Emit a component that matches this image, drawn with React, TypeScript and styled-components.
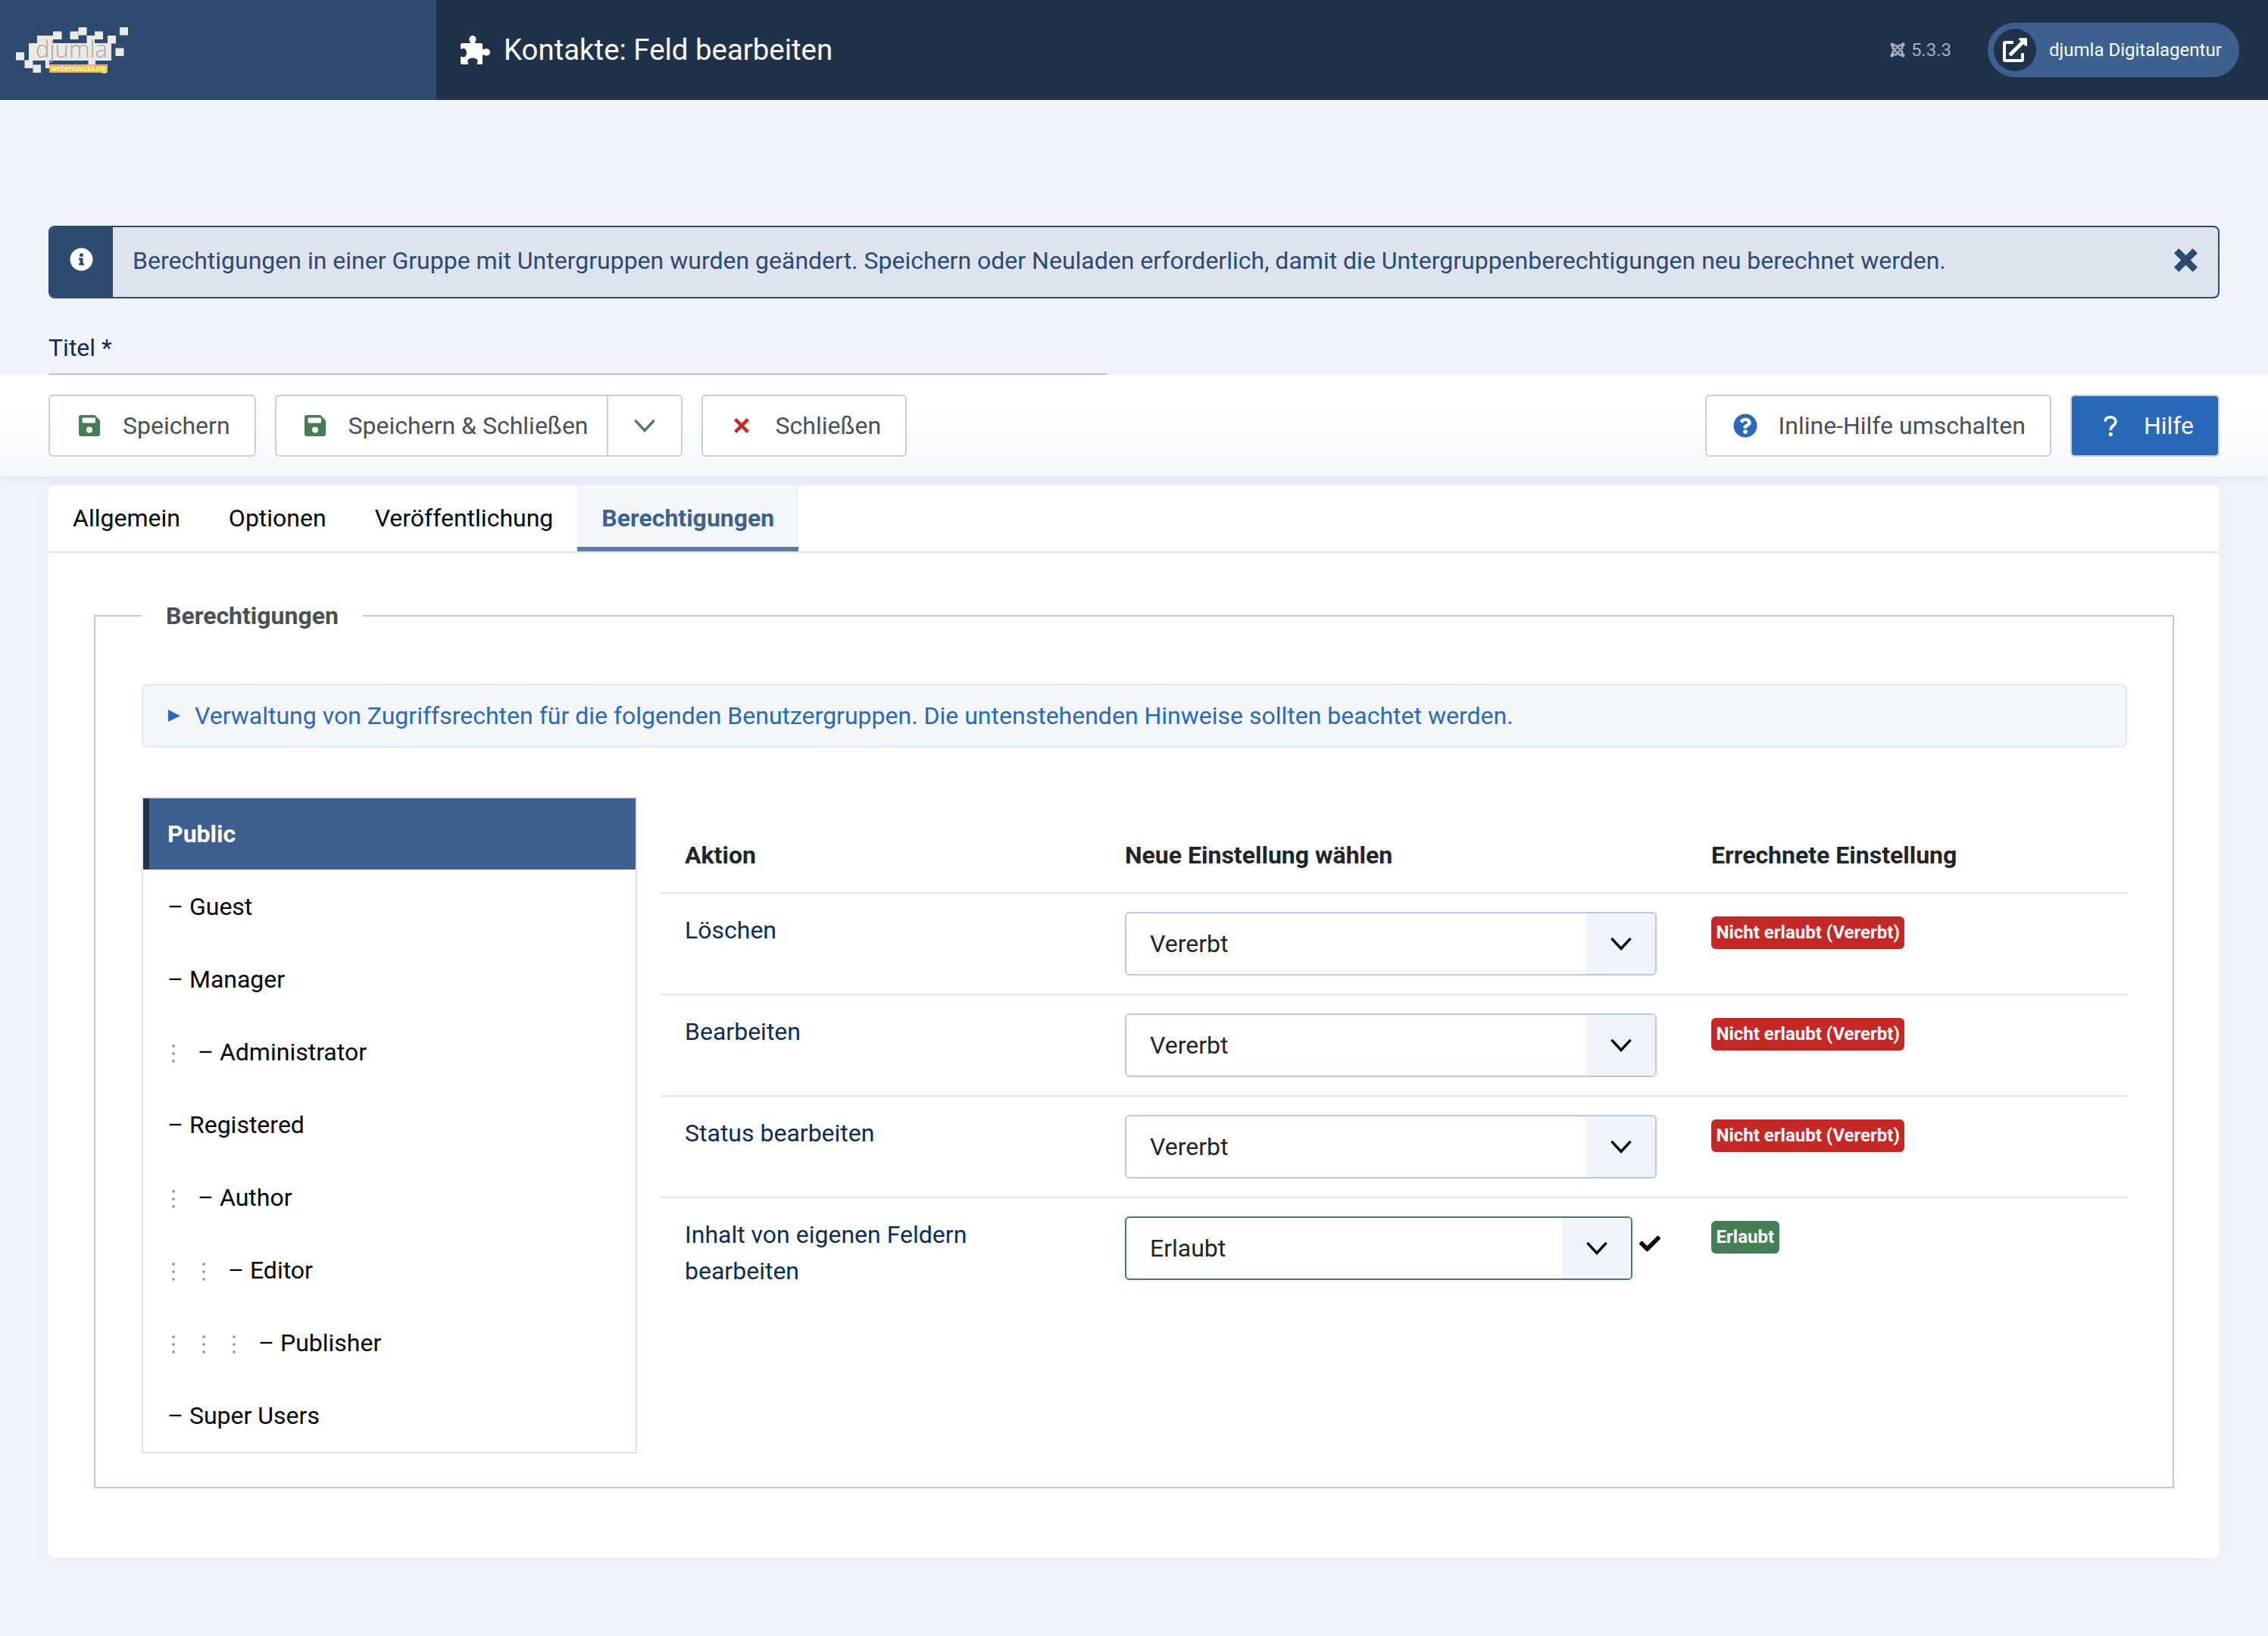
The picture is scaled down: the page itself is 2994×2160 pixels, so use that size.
import React from "react";
import styled, { createGlobalStyle } from "styled-components";
import {
    FaCheck,
    FaExternalLinkAlt,
    FaInfoCircle,
    FaJoomla,
    FaQuestionCircle,
} from "react-icons/fa";

const GlobalStyle = createGlobalStyle`
    * {
        box-sizing: border-box;
    }

    body {
        margin: 0;
        min-height: 2160px;
        background: #eff4fc;
        font-family: Roboto, "Liberation Sans", sans-serif;
        font-size: 32px;
        line-height: 48px;
        color: #000;
    }
`;

const Header = styled.header`
    display: flex;
    align-items: center;
    height: 132px;
    background: #20314a;
    color: #fff;
`;

const LogoPanel = styled.div`
    display: flex;
    width: 576px;
    height: 100%;
    background: #2d4a6f;
`;

const PageTitle = styled.h1`
    display: flex;
    align-items: center;
    gap: 18px;
    margin: 0 0 0 32px;
    font-size: 38.4px;
    line-height: 48px;
    font-weight: 400;
`;

const HeaderRight = styled.div`
    display: flex;
    align-items: center;
    margin-left: auto;
    padding-right: 38px;
`;

const Version = styled.span`
    display: flex;
    align-items: center;
    gap: 7px;
    margin-right: 48px;
    font-size: 24px;
    color: #a3afc0;
`;

const SitePill = styled.div`
    display: flex;
    align-items: center;
    gap: 17px;
    width: 332px;
    height: 72px;
    padding-left: 8px;
    border-radius: 36px;
    background: #3d618f;
    font-size: 24px;
`;

const PillIcon = styled.span`
    display: flex;
    align-items: center;
    justify-content: center;
    width: 56px;
    height: 56px;
    border-radius: 50%;
    background: #20314a;
`;

const Main = styled.div`
    padding: 166px 64px 0;
`;

const Alert = styled.div`
    display: flex;
    width: 2866px;
    height: 96px;
    border: 2px solid #2d4a6f;
    border-radius: 8px;
    background: #dde4f0;
    color: #2d4a6f;
    overflow: hidden;
`;

const AlertIcon = styled.div`
    display: flex;
    justify-content: center;
    flex: none;
    width: 83px;
    padding-top: 27px;
    background: #2d4a6f;
    color: #fff;
`;

const AlertText = styled.div`
    flex: 1;
    padding: 20px 26px;
`;

const AlertClose = styled.div`
    padding: 24px 27px 0 0;
`;

const TitleLabel = styled.label`
    display: block;
    margin-top: 41px;
    color: #0f2b52;
`;

const TitleInputEdge = styled.div`
    width: 1398px;
    height: 2px;
    margin-top: 10px;
    border-radius: 6px 6px 0 0;
    background: #b9c9e0;
`;

const Toolbar = styled.div`
    position: relative;
    display: flex;
    align-items: center;
    gap: 25px;
    height: 134px;
    padding: 0 64px;
    background: linear-gradient(#fff 30%, #f4f7fb);
    box-shadow: 0 4px 12px rgba(30, 50, 90, 0.08);
`;

const ToolbarSpacer = styled.div`
    flex: 1;
`;

const Button = styled.div<{ $primary?: boolean; $left?: number }>`
    display: flex;
    align-items: center;
    height: 82px;
    padding: 0 32px 0 ${(props) => props.$left ?? 38}px;
    border: 2px solid #c6cfdc;
    border-radius: 6px;
    background: ${(props) => (props.$primary ? "#2a69b8" : "#fff")};
    color: ${(props) => (props.$primary ? "#fff" : "#495057")};
`;

const ButtonGroup = styled.div`
    display: flex;
    height: 82px;
    border: 2px solid #c6cfdc;
    border-radius: 6px;
    background: #fff;
    color: #495057;
`;

const GroupMain = styled.div`
    display: flex;
    align-items: center;
    padding: 0 24px 0 37px;
    border-right: 2px solid #c6cfdc;
`;

const GroupToggle = styled.div`
    display: flex;
    align-items: center;
    justify-content: center;
    width: 96px;
`;

const ButtonIcon = styled.span<{ $color: string; $width: number; $inset?: number }>`
    display: flex;
    align-items: center;
    width: ${(props) => props.$width}px;
    padding-left: ${(props) => props.$inset ?? 0}px;
    color: ${(props) => props.$color};
`;

const Card = styled.div`
    width: 2866px;
    height: 1416px;
    margin: 12px 64px 0;
    border-radius: 8px;
    background: #fff;
    box-shadow: 0 0 20px rgba(30, 50, 90, 0.04);
`;

const TabBar = styled.div`
    display: flex;
    height: 89px;
    border-bottom: 2px solid #dfe5f0;
`;

const Tab = styled.div<{ $active?: boolean }>`
    height: 87px;
    padding: 19px 32px 0;
    background: ${(props) => (props.$active ? "#f3f6fa" : "transparent")};
    border-bottom: 6px solid ${(props) => (props.$active ? "#5d7ca6" : "transparent")};
    color: ${(props) => (props.$active ? "#3d618f" : "#000")};
    font-weight: ${(props) => (props.$active ? 700 : 400)};
`;

const Fieldset = styled.fieldset`
    width: 2746px;
    min-width: 0;
    height: 1176px;
    margin: 59px 0 0 60px;
    padding: 66px 60px 0 61px;
    border: 2px solid #b9c9e0;
`;

const Legend = styled.legend`
    padding: 0 32px;
    color: #495057;
    font-weight: 700;
`;

const Details = styled.div`
    display: flex;
    align-items: center;
    gap: 19px;
    height: 84px;
    padding: 0 33px;
    border: 2px solid #e2e8f2;
    border-radius: 8px;
    background: #f3f6fa;
    color: #2a69b8;
`;

const DetailsMarker = styled.span`
    width: 0;
    height: 0;
    border-left: 16px solid #2a69b8;
    border-top: 8px solid transparent;
    border-bottom: 8px solid transparent;
`;

const Columns = styled.div`
    display: flex;
    gap: 31px;
    margin-top: 65px;
`;

const GroupList = styled.div`
    flex: none;
    width: 654px;
    height: 867px;
    border: 2px solid #dfe3ea;
`;

const ActiveGroup = styled.div`
    height: 94px;
    padding: 23px 0 0 24px;
    border-left: 8px solid #20314a;
    background: #3d618f;
    color: #fff;
    font-weight: 700;
`;

const GroupRow = styled.div`
    display: flex;
    align-items: center;
    height: 96px;
    padding: 1px 0 0 32px;
    white-space: pre;
`;

const Dots = styled.span`
    display: flex;
    flex-direction: column;
    align-items: center;
    gap: 6px;
    flex: none;
    width: 40px;
    margin-left: -12px;
    margin-right: 12px;
    padding-top: 4px;

    i {
        width: 4px;
        height: 4px;
        border-radius: 50%;
        background: #a0a0a0;
    }
`;

const Table = styled.table`
    width: 1936px;
    height: 0;
    margin-top: 53px;
    table-layout: fixed;
    border-collapse: collapse;

    col:nth-child(1) {
        width: 581px;
    }

    col:nth-child(2) {
        width: 774px;
    }

    th {
        height: 74px;
        padding: 0 32px;
        text-align: left;
        vertical-align: top;
        font-weight: 700;
        color: #212529;
    }

    td {
        height: 134px;
        padding: 24px 32px;
        border-top: 2px solid #dfe3ea;
        vertical-align: top;
    }
`;

const ActionName = styled.span`
    color: #0f2b52;
`;

const SelectRow = styled.div`
    display: flex;
    align-items: flex-start;
`;

const Select = styled.div<{ $valid?: boolean }>`
    display: flex;
    width: ${(props) => (props.$valid ? 670 : 702)}px;
    height: 84px;
    border: 2px solid ${(props) => (props.$valid ? "#457d54" : "#b9c9e0")};
    border-radius: 6px;
    overflow: hidden;
    color: #212529;
`;

const SelectValue = styled.div`
    flex: 1;
    padding: 16px 31px;
`;

const SelectArrow = styled.div`
    display: flex;
    align-items: center;
    justify-content: center;
    width: 91px;
    background: #eff4fc;
`;

const ValidMark = styled.span`
    display: flex;
    margin: 22px 0 0 9px;
`;

const Badge = styled.span<{ $allowed?: boolean }>`
    display: inline-block;
    height: 43px;
    margin-top: 4px;
    padding: 0 6.5px;
    border-radius: 6px;
    background: ${(props) => (props.$allowed ? "#457d54" : "#c52827")};
    color: #fff;
    font-size: 24px;
    line-height: 43px;
    font-weight: 700;
`;

const ChevronDown = ({ color, width }: { color: string; width: number }) => (
    <svg width={width} height={width * 0.58} viewBox="0 0 30 18" fill="none">
        <polyline points="2,2 15,16 28,2" stroke={color} strokeWidth="3.5" />
    </svg>
);

const PuzzleIcon = () => (
    <svg width="39" height="38" viewBox="0 0 39 38" fill="#fff">
        <path d="M2 10 H12 C13 10 13.5 9 12.5 8 C10 5 12 0 16 0 C20 0 22 5 19.5 8 C18.5 9 19 10 20 10 H27 C28 10 29 11 29 12 V17 C29 18 30 18.5 31 18 C34 16 39 17.5 39 22 C39 26 34 28 31 25.5 C30 25 29 25.5 29 26.5 V36 C29 37 28 38 27 38 H23 C22 38 21.5 37 22 36 C24 33 21.5 29.5 16 29.5 C10.5 29.5 8 33 10 36 C10.5 37 10 38 9 38 H2 C1 38 0 37 0 36 V29 C0 28 1 27.5 2 28 C4.5 29.5 8 27.5 8 23 C8 18.5 4.5 15.5 2 17.5 C1 18 0 17.5 0 16.5 V12 C0 11 1 10 2 10 Z" />
    </svg>
);

const SaveIcon = () => (
    <svg width="28" height="28" viewBox="0 0 28 28" fill="#457d54">
        <path
            fillRule="evenodd"
            d="M3 0 H21 L28 7 V25 A3 3 0 0 1 25 28 H3 A3 3 0 0 1 0 25 V3 A3 3 0 0 1 3 0 Z M6 3.5 A1.5 1.5 0 0 0 4.5 5 V9 A1.5 1.5 0 0 0 6 10.5 H20.5 A1.5 1.5 0 0 0 22 9 V5 A1.5 1.5 0 0 0 20.5 3.5 Z M14 15.5 A4 4 0 1 0 14 23.5 A4 4 0 1 0 14 15.5 Z"
        />
    </svg>
);

const CrossIcon = ({ color, size, weight }: { color: string; size: number; weight: number }) => {
    const edge = (weight / 2) * Math.SQRT1_2;
    return (
        <svg width={size} height={size} viewBox={`0 0 ${size} ${size}`} fill="none">
            <path
                d={`M${edge} ${edge} L${size - edge} ${size - edge} M${size - edge} ${edge} L${edge} ${size - edge}`}
                stroke={color}
                strokeWidth={weight}
            />
        </svg>
    );
};

const QuestionIcon = () => (
    <svg width="18" height="27" viewBox="0 0 18 27" fill="none">
        <path
            d="M2 7.5 C2 3.8 5 1.8 9 1.8 C13 1.8 16 4 16 7.5 C16 10.5 14 12 12 13.5 C10 15 9.3 16 9.3 19"
            stroke="#fff"
            strokeWidth="3.6"
        />
        <circle cx="9.3" cy="24.3" r="2.6" fill="#fff" />
    </svg>
);

const Logo = () => (
    <svg width="180" height="110" viewBox="0 0 180 110">
        <g fill="#ece9e4">
            <rect x="21" y="69" width="11" height="10.5" />
            <rect x="38" y="57" width="109" height="23" />
            <rect x="49" y="47" width="21" height="11" />
            <rect x="70" y="41.5" width="11.5" height="10.5" />
            <rect x="92.5" y="41.5" width="11" height="10.5" />
            <rect x="103.5" y="36" width="11" height="10.5" />
            <rect x="114.5" y="47" width="10.5" height="11" />
            <rect x="125" y="41.5" width="11" height="10.5" />
            <rect x="142" y="47" width="11" height="10.5" />
            <rect x="158" y="36" width="11" height="10.5" />
            <rect x="152.5" y="63.5" width="11" height="10.5" />
            <rect x="32.5" y="79.5" width="11" height="10.5" />
            <rect x="43.5" y="85.5" width="10.5" height="10.5" />
            <rect x="60" y="79" width="5" height="11" />
            <rect x="116.5" y="79" width="9.5" height="6" />
        </g>
        <text x="47" y="76" fontFamily="Open Sans" fontSize="31" fontWeight="300" fill="#a9a5a5" textLength={95}>
            djumla
        </text>
        <rect x="65" y="85" width="77" height="11" fill="#fdb813" />
        <text x="67" y="94" fontFamily="Open Sans" fontSize="10" fontWeight="600" fill="#fff" textLength={73}>
            webentwicklung
        </text>
    </svg>
);

const groups = [
    { name: "Guest", level: 0 },
    { name: "Manager", level: 0 },
    { name: "Administrator", level: 1 },
    { name: "Registered", level: 0 },
    { name: "Author", level: 1 },
    { name: "Editor", level: 2 },
    { name: "Publisher", level: 3 },
    { name: "Super Users", level: 0 },
];

const actions = [
    { name: "Löschen", value: "Vererbt", result: "Nicht erlaubt (Vererbt)" },
    { name: "Bearbeiten", value: "Vererbt", result: "Nicht erlaubt (Vererbt)" },
    { name: "Status bearbeiten", value: "Vererbt", result: "Nicht erlaubt (Vererbt)" },
    { name: "Inhalt von eigenen Feldern bearbeiten", value: "Erlaubt", result: "Erlaubt", allowed: true },
];

const App = () => {
    return (
        <>
            <GlobalStyle />
            <Header>
                <LogoPanel>
                    <Logo />
                </LogoPanel>
                <PageTitle>
                    <PuzzleIcon />
                    Kontakte: Feld bearbeiten
                </PageTitle>
                <HeaderRight>
                    <Version>
                        <FaJoomla size={22} />
                        5.3.3
                    </Version>
                    <SitePill>
                        <PillIcon>
                            <FaExternalLinkAlt size={32} />
                        </PillIcon>
                        djumla Digitalagentur
                    </SitePill>
                </HeaderRight>
            </Header>

            <Main>
                <Alert>
                    <AlertIcon>
                        <FaInfoCircle size={31} />
                    </AlertIcon>
                    <AlertText>
                        Berechtigungen in einer Gruppe mit Untergruppen wurden geändert. Speichern oder Neuladen
                        erforderlich, damit die Untergruppenberechtigungen neu berechnet werden.
                    </AlertText>
                    <AlertClose>
                        <CrossIcon color="#2d4a6f" size={31} weight={9} />
                    </AlertClose>
                </Alert>
                <TitleLabel>Titel *</TitleLabel>
                <TitleInputEdge />
            </Main>

            <Toolbar>
                <Button>
                    <ButtonIcon $color="#457d54" $width={58}>
                        <SaveIcon />
                    </ButtonIcon>
                    Speichern
                </Button>
                <ButtonGroup>
                    <GroupMain>
                        <ButtonIcon $color="#457d54" $width={58}>
                            <SaveIcon />
                        </ButtonIcon>
                        Speichern &amp; Schließen
                    </GroupMain>
                    <GroupToggle>
                        <ChevronDown color="#457d54" width={30} />
                    </GroupToggle>
                </ButtonGroup>
                <Button>
                    <ButtonIcon $color="#c52827" $width={58} $inset={3}>
                        <CrossIcon color="#c52827" size={20} weight={4.5} />
                    </ButtonIcon>
                    Schließen
                </Button>
                <ToolbarSpacer />
                <Button $left={35}>
                    <ButtonIcon $color="#2a69b8" $width={60}>
                        <FaQuestionCircle size={32} />
                    </ButtonIcon>
                    Inline-Hilfe umschalten
                </Button>
                <Button $primary $left={42}>
                    <ButtonIcon $color="#fff" $width={53}>
                        <QuestionIcon />
                    </ButtonIcon>
                    Hilfe
                </Button>
            </Toolbar>

            <Card>
                <TabBar>
                    <Tab>Allgemein</Tab>
                    <Tab>Optionen</Tab>
                    <Tab>Veröffentlichung</Tab>
                    <Tab $active>Berechtigungen</Tab>
                </TabBar>
                <Fieldset>
                    <Legend>Berechtigungen</Legend>
                    <Details>
                        <DetailsMarker />
                        Verwaltung von Zugriffsrechten für die folgenden Benutzergruppen. Die untenstehenden Hinweise
                        sollten beachtet werden.
                    </Details>
                    <Columns>
                        <GroupList>
                            <ActiveGroup>Public</ActiveGroup>
                            {groups.map((group) => (
                                <GroupRow key={group.name}>
                                    {Array.from({ length: group.level }).map((_, index) => (
                                        <Dots key={index}>
                                            <i />
                                            <i />
                                            <i />
                                        </Dots>
                                    ))}
                                    – {group.name}
                                </GroupRow>
                            ))}
                        </GroupList>
                        <Table>
                            <colgroup>
                                <col />
                                <col />
                                <col />
                            </colgroup>
                            <thead>
                                <tr>
                                    <th>Aktion</th>
                                    <th>Neue Einstellung wählen</th>
                                    <th>Errechnete Einstellung</th>
                                </tr>
                            </thead>
                            <tbody>
                                {actions.map((action) => (
                                    <tr key={action.name}>
                                        <td>
                                            <ActionName>{action.name}</ActionName>
                                        </td>
                                        <td>
                                            <SelectRow>
                                                <Select $valid={action.allowed}>
                                                    <SelectValue>{action.value}</SelectValue>
                                                    <SelectArrow>
                                                        <ChevronDown color="#000" width={30} />
                                                    </SelectArrow>
                                                </Select>
                                                {action.allowed && (
                                                    <ValidMark>
                                                        <FaCheck size={28} />
                                                    </ValidMark>
                                                )}
                                            </SelectRow>
                                        </td>
                                        <td>
                                            <Badge $allowed={action.allowed}>{action.result}</Badge>
                                        </td>
                                    </tr>
                                ))}
                            </tbody>
                        </Table>
                    </Columns>
                </Fieldset>
            </Card>
        </>
    );
};

export default App;
